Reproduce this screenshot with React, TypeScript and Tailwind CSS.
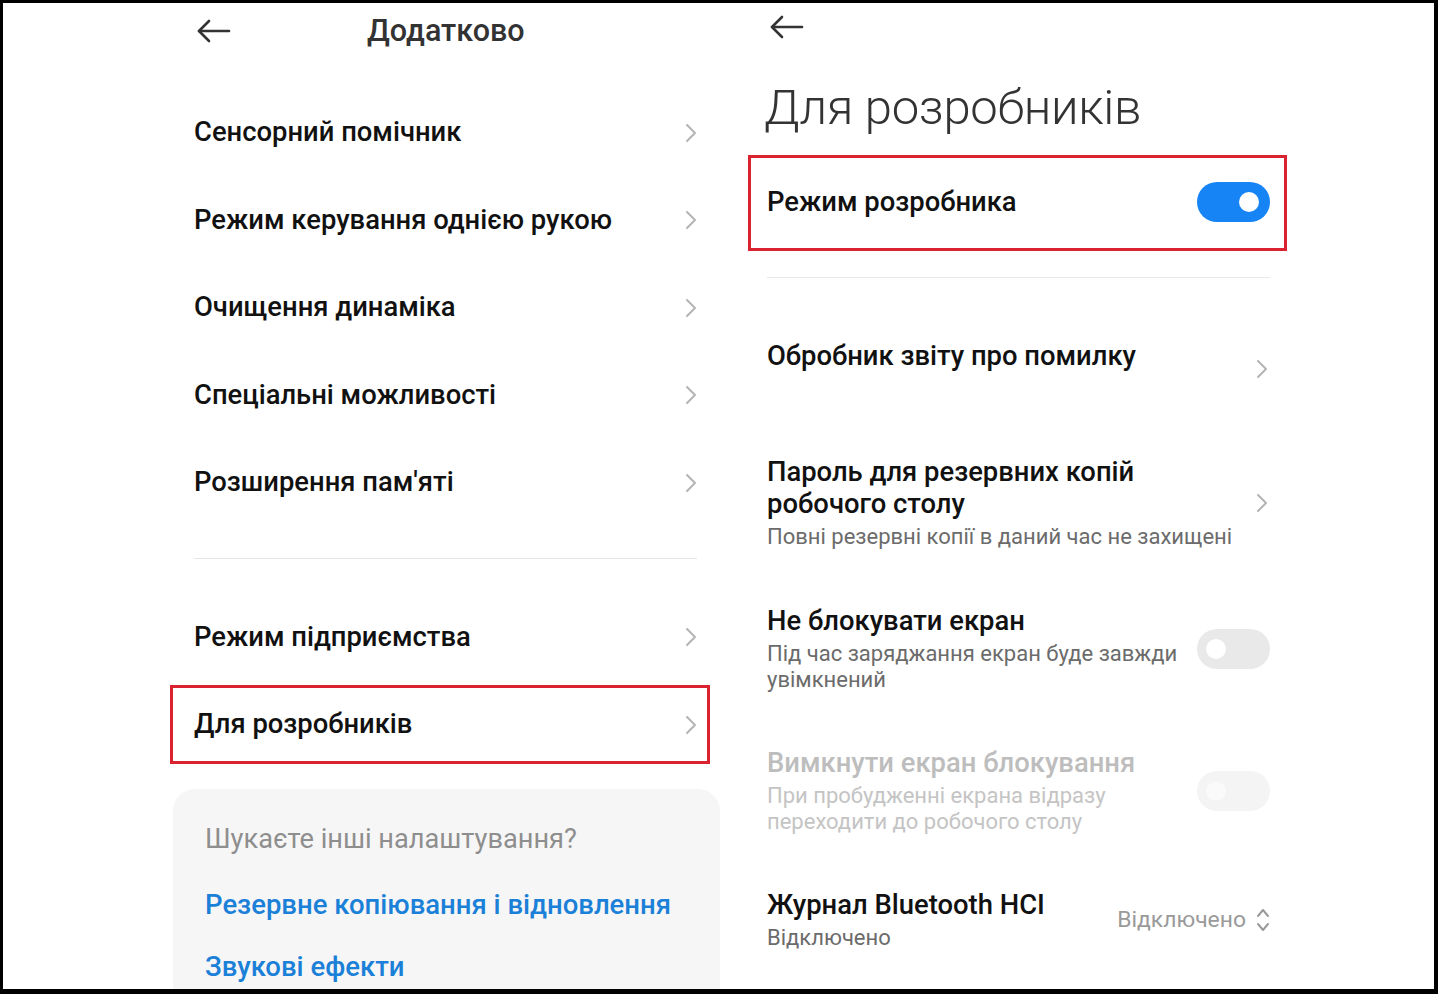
import React from 'react'

const FONT = { fontFamily: 'Roboto, "Noto Sans", "Liberation Sans", sans-serif' }

const BackArrow: React.FC = () => (
  <svg width="34" height="24" viewBox="0 0 34 24" fill="none" stroke="#333" strokeWidth="2.6" strokeLinecap="round" strokeLinejoin="round">
    <path d="M2 12 H32" />
    <path d="M12 2 L2 12 L12 22" />
  </svg>
)

const Chevron: React.FC = () => (
  <svg width="12" height="20" viewBox="0 0 12 20" fill="none" stroke="#b4b4b4" strokeWidth="2" strokeLinecap="round" strokeLinejoin="round">
    <path d="M2 2 L10 10 L2 18" />
  </svg>
)

const UpDown: React.FC = () => (
  <svg width="14" height="26" viewBox="0 0 14 26" fill="none" stroke="#9a9a9a" strokeWidth="2" strokeLinecap="round" strokeLinejoin="round">
    <path d="M2 9 L7 3 L12 9" />
    <path d="M2 17 L7 23 L12 17" />
  </svg>
)

const Toggle: React.FC<{ on?: boolean; disabled?: boolean }> = ({ on, disabled }) => {
  if (on) {
    return (
      <div className="w-[73px] h-[40px] rounded-full bg-[#1784f6] flex items-center justify-end pr-[11px]">
        <div className="w-[20px] h-[20px] rounded-full bg-white" />
      </div>
    )
  }
  return (
    <div
      className={
        disabled
          ? 'w-[73px] h-[40px] rounded-full bg-[#f4f4f4] flex items-center pl-[9px]'
          : 'w-[73px] h-[40px] rounded-full bg-[#e9e9e9] flex items-center pl-[9px]'
      }
    >
      <div className={disabled ? 'w-[20px] h-[20px] rounded-full bg-[#fafafa]' : 'w-[20px] h-[20px] rounded-full bg-white'} />
    </div>
  )
}

const leftRows = [
  'Сенсорний помічник',
  'Режим керування однією рукою',
  'Очищення динаміка',
  'Спеціальні можливості',
  "Розширення пам'яті",
]

const LeftRow: React.FC<{ label: string }> = ({ label }) => (
  <div className="h-[87.5px] flex items-center justify-between pl-[24px] pr-[23px]">
    <span className="text-[27.4px] font-medium text-[#111]">{label}</span>
    <Chevron />
  </div>
)

export default function App() {
  return (
    <div className="w-[1438px] h-[994px] bg-black pt-[3px] pl-[3px] pr-[4px] pb-[5px]" style={FONT}>
      <div className="w-full h-full bg-white flex overflow-hidden">
        {/* Left screen: Додатково */}
        <div className="ml-[167px] w-[550px] flex flex-col">
          <div className="h-[56px] flex items-center pl-[27px]">
            <BackArrow />
            <span className="ml-[136px] text-[30.5px] font-medium text-[#333]">Додатково</span>
          </div>
          <div className="mt-[30px]">
            {leftRows.map((r) => (
              <LeftRow key={r} label={r} />
            ))}
          </div>
          <div className="mt-[31px] mx-[24px] mr-[23px] h-px bg-[#e6e6e6]" />
          <div className="mt-[35px]">
            <LeftRow label="Режим підприємства" />
          </div>
          <div className="mt-[4px] mr-[10px] h-[79px] border-[3px] border-[#d92330] flex items-center justify-between pl-[21px] pr-[10px]">
            <span className="text-[27.4px] font-medium text-[#111]">Для розробників</span>
            <Chevron />
          </div>
          <div className="mt-[25px] ml-[3px] flex-1 rounded-t-[22px] bg-[#f6f6f6] pl-[32px] pt-[34px]">
            <div className="text-[27.2px] leading-[32px] text-[#8e8e8e]">Шукаєте інші налаштування?</div>
            <div className="mt-[34px] text-[27.5px] leading-[32px] font-medium text-[#1b80d8]">Резервне копіювання і відновлення</div>
            <div className="mt-[30px] text-[27.5px] leading-[32px] font-medium text-[#1b80d8]">Звукові ефекти</div>
          </div>
        </div>

        {/* Right screen: Для розробників */}
        <div className="ml-[28px] w-[542px] flex flex-col">
          <div className="h-[48px] flex items-center pl-[22px]">
            <BackArrow />
          </div>
          <div className="mt-[29px] h-[56px] pl-[16px] flex items-center text-[49px] font-light text-[#333] tracking-[-0.3px]">
            Для розробників
          </div>
          <div className="mt-[19px] w-[539px] h-[96px] border-[3px] border-[#d92330] flex items-center justify-between pl-[16px] pr-[14px]">
            <span className="text-[27.4px] font-medium text-[#111]">Режим розробника</span>
            <div className="-mt-[3px]">
              <Toggle on />
            </div>
          </div>
          <div className="mt-[26px] ml-[19px] mr-[20px] h-px bg-[#e8e8e8]" />

          {/* Обробник звіту */}
          <div className="mt-[62px] pl-[19px] pr-[20px] flex items-center justify-between">
            <div>
              <div className="text-[27.4px] leading-[32px] font-medium text-[#111]">Обробник звіту про помилку</div>
              <div className="h-[26px]" />
            </div>
            <div className="pr-[2px]">
              <Chevron />
            </div>
          </div>

          {/* Пароль */}
          <div className="mt-[58px] pl-[19px] pr-[20px] flex items-center justify-between">
            <div>
              <div className="text-[27.4px] leading-[32px] font-medium text-[#111]">
                Пароль для резервних копій
                <br />
                робочого столу
              </div>
              <div className="mt-[4px] text-[22px] leading-[26px] text-[#6b6b6b]">Повні резервні копії в даний час не захищені</div>
            </div>
            <div className="pr-[2px]">
              <Chevron />
            </div>
          </div>

          {/* Не блокувати екран */}
          <div className="mt-[55px] pl-[19px] pr-[20px] flex items-center justify-between">
            <div>
              <div className="text-[27.4px] leading-[32px] font-medium text-[#111]">Не блокувати екран</div>
              <div className="mt-[4px] w-[420px] text-[22px] leading-[26px] text-[#6b6b6b]">
                Під час заряджання екран буде завжди
                <br />
                увімкнений
              </div>
            </div>
            <Toggle />
          </div>

          {/* Вимкнути екран блокування */}
          <div className="mt-[54px] pl-[19px] pr-[20px] flex items-center justify-between">
            <div>
              <div className="text-[27.4px] leading-[32px] font-medium text-[#bdbdbd]">Вимкнути екран блокування</div>
              <div className="mt-[4px] w-[420px] text-[22px] leading-[26px] text-[#c4c4c4]">
                При пробудженні екрана відразу
                <br />
                переходити до робочого столу
              </div>
            </div>
            <Toggle disabled />
          </div>

          {/* Журнал Bluetooth HCI */}
          <div className="mt-[54px] pl-[19px] pr-[20px] flex items-center justify-between">
            <div>
              <div className="text-[27.4px] leading-[32px] font-medium text-[#111]">Журнал Bluetooth HCI</div>
              <div className="mt-[4px] text-[22px] leading-[26px] text-[#6b6b6b]">Відключено</div>
            </div>
            <div className="flex items-center gap-[10px]">
              <span className="text-[22.9px] text-[#9a9a9a]">Відключено</span>
              <UpDown />
            </div>
          </div>
        </div>
      </div>
    </div>
  )
}
